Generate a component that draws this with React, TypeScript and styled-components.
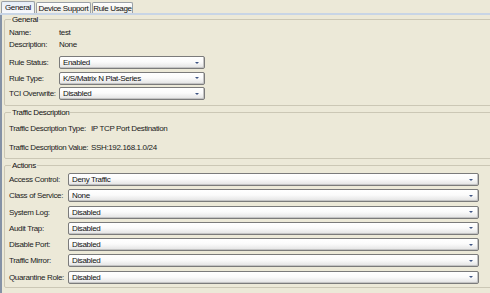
import React from "react"
import styled, { createGlobalStyle } from "styled-components"

const Global = createGlobalStyle`
  html, body { margin: 0; padding: 0; background: #ece9d8; }
`

const Screen = styled.div`
  width: 490px;
  height: 293px;
  overflow: hidden;
  background: #ece9d8;
  font-family: "Liberation Sans", Arial, sans-serif;
  font-size: 8px;
  letter-spacing: -0.35px;
  color: #1c1c1c;
`

const TabStrip = styled.div`
  display: flex;
  align-items: flex-end;
  gap: 1px;
  height: 13px;
  padding-left: 1px;
  border-bottom: 2px solid #c8d5e6;
`

const Tab = styled.div<{ $w: number; $active?: boolean }>`
  box-sizing: border-box;
  width: ${p => p.$w}px;
  height: ${p => (p.$active ? 12 : 11)}px;
  display: flex;
  align-items: center;
  justify-content: center;
  border: 1px solid #9aa0a6;
  border-bottom: none;
  border-radius: 2px 2px 0 0;
  background: ${p => (p.$active ? "linear-gradient(#e6eef8, #f7f8fb)" : "linear-gradient(#ffffff, #ecebe4)")};
  color: #111;
`

const Panel = styled.div`
  height: 278px;
  border-left: 2px solid #8592a6;
  padding-left: 2px;
`

const Group = styled.fieldset<{ $mt: number; $pt: number; $pb: number }>`
  width: 520px;
  box-sizing: border-box;
  margin: ${p => p.$mt}px 0 0 0;
  padding: ${p => p.$pt}px 0 ${p => p.$pb}px 4px;
  border: 1px solid #cbc7b5;
  border-radius: 2px;
  min-width: 0;
`

const Legend = styled.legend`
  padding: 0 1px;
  margin-left: 2px;
  line-height: 9px;
  font-size: 8px;
  color: #111;
`

const Row = styled.div<{ $label: number; $h: number; $mb?: number }>`
  display: grid;
  grid-template-columns: ${p => p.$label}px auto;
  align-items: center;
  height: ${p => p.$h}px;
  margin-bottom: ${p => p.$mb ?? 0}px;
  white-space: nowrap;
`

const Label = styled.span`
  color: #222;
`

const Value = styled.span`
  color: #1a1a1a;
`

const Combo = styled.div<{ $w: number }>`
  box-sizing: border-box;
  width: ${p => p.$w}px;
  height: 13px;
  display: flex;
  align-items: center;
  padding: 0 5px 0 3px;
  border: 1px solid #7b7b7b;
  border-radius: 2px;
  background: linear-gradient(#ffffff, #fbfbfb 45%, #e2e2e2);
  box-shadow: inset -1px -1px 0 #c4c4c4;
  color: #111;
`

const Arrow = styled.span`
  margin-left: auto;
  width: 0;
  height: 0;
  border-left: 2px solid transparent;
  border-right: 2px solid transparent;
  border-top: 2px solid #3f5583;
`

const Select = ({ value, w }: { value: string; w: number }) => (
  <Combo $w={w}>
    {value}
    <Arrow />
  </Combo>
)

const actions: [string, string][] = [
  ["Access Control:", "Deny Traffic"],
  ["Class of Service:", "None"],
  ["System Log:", "Disabled"],
  ["Audit Trap:", "Disabled"],
  ["Disable Port:", "Disabled"],
  ["Traffic Mirror:", "Disabled"],
  ["Quarantine Role:", "Disabled"],
]

export default function App() {
  return (
    <Screen>
      <Global />
      <TabStrip>
        <Tab $w={34} $active>General</Tab>
        <Tab $w={55}>Device Support</Tab>
        <Tab $w={41}>Rule Usage</Tab>
      </TabStrip>
      <Panel>
        <Group $mt={0} $pt={2} $pb={5}>
          <Legend>General</Legend>
          <Row $label={50} $h={12}>
            <Label>Name:</Label>
            <Value>test</Value>
          </Row>
          <Row $label={50} $h={12} $mb={6}>
            <Label>Description:</Label>
            <Value>None</Value>
          </Row>
          <Row $label={50} $h={13} $mb={2.5}>
            <Label>Rule Status:</Label>
            <Select value="Enabled" w={146} />
          </Row>
          <Row $label={50} $h={13} $mb={2.5}>
            <Label>Rule Type:</Label>
            <Select value="K/S/Matrix N Plat-Series" w={146} />
          </Row>
          <Row $label={50} $h={13}>
            <Label>TCI Overwrite:</Label>
            <Select value="Disabled" w={146} />
          </Row>
        </Group>
        <Group $mt={1.5} $pt={4.5} $pb={3.5}>
          <Legend>Traffic Description</Legend>
          <Row $label={82} $h={14} $mb={5}>
            <Label>Traffic Description Type:</Label>
            <Value>IP TCP Port Destination</Value>
          </Row>
          <Row $label={82} $h={14}>
            <Label>Traffic Description Value:</Label>
            <Value>SSH:192.168.1.0/24</Value>
          </Row>
        </Group>
        <Group $mt={2} $pt={3.5} $pb={3}>
          <Legend>Actions</Legend>
          {actions.map(([label, value], i) => (
            <Row key={label} $label={59} $h={13} $mb={i < actions.length - 1 ? 3.3 : 0}>
              <Label>{label}</Label>
              <Select value={value} w={411} />
            </Row>
          ))}
        </Group>
      </Panel>
    </Screen>
  )
}
